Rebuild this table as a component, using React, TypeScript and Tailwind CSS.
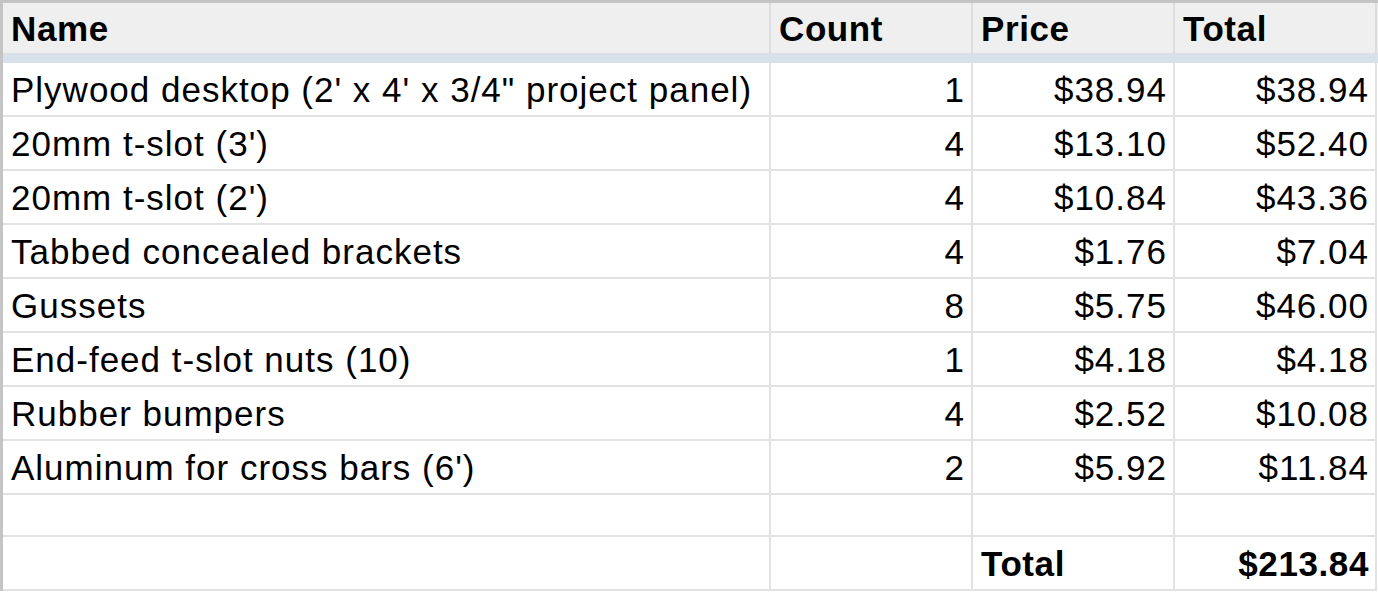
import React from "react";

type Item = { name: string; count: number; price: string; total: string };

const items: Item[] = [
  { name: `Plywood desktop (2' x 4' x 3/4" project panel)`, count: 1, price: "$38.94", total: "$38.94" },
  { name: "20mm t-slot (3')", count: 4, price: "$13.10", total: "$52.40" },
  { name: "20mm t-slot (2')", count: 4, price: "$10.84", total: "$43.36" },
  { name: "Tabbed concealed brackets", count: 4, price: "$1.76", total: "$7.04" },
  { name: "Gussets", count: 8, price: "$5.75", total: "$46.00" },
  { name: "End-feed t-slot nuts (10)", count: 1, price: "$4.18", total: "$4.18" },
  { name: "Rubber bumpers", count: 4, price: "$2.52", total: "$10.08" },
  { name: "Aluminum for cross bars (6')", count: 2, price: "$5.92", total: "$11.84" },
];

const cols = "grid grid-cols-[768px_202px_202px_202px]";
const cell = "border-r-2 border-b-2 border-[#e2e2e2] flex items-center pl-[8px] pr-[6px] whitespace-nowrap";

export default function App() {
  return (
    <div
      className="w-[1378px] h-[592px] bg-white overflow-hidden text-[35px] tracking-[1px] text-black leading-none"
      style={{ fontFamily: '"Liberation Sans", Arial, sans-serif' }}
    >
      <div className="border-t-[3px] border-l-[3px] border-[#c4c4c4]">
        {/* header */}
        <div className={`${cols} h-[50px] bg-[#efefef] font-bold tracking-[0.6px]`}>
          {["Name", "Count", "Price", "Total"].map((h) => (
            <div key={h} className="border-r-2 border-[#dcdcdc] flex items-center px-[8px]">
              {h}
            </div>
          ))}
        </div>
        <div className="h-[10px] bg-[#d8e0ea]" />

        {items.map((it) => (
          <div key={it.name} className={`${cols} h-[54px]`}>
            <div className={cell}>{it.name}</div>
            <div className={`${cell} justify-end`}>{it.count}</div>
            <div className={`${cell} justify-end`}>{it.price}</div>
            <div className={`${cell} justify-end`}>{it.total}</div>
          </div>
        ))}

        <div className={`${cols} h-[42px]`}>
          <div className={cell} />
          <div className={cell} />
          <div className={cell} />
          <div className={cell} />
        </div>

        <div className={`${cols} h-[54px] font-bold tracking-[0.6px]`}>
          <div className={cell} />
          <div className={cell} />
          <div className={cell}>Total</div>
          <div className={`${cell} justify-end`}>$213.84</div>
        </div>
      </div>
    </div>
  );
}
